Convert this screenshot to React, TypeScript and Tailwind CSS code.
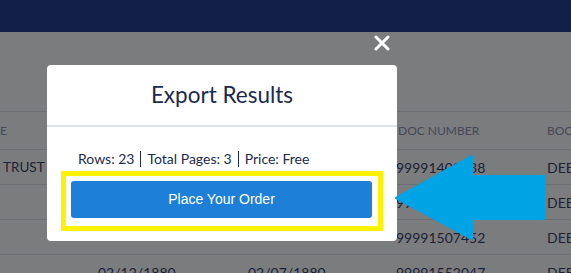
import React from 'react';

const rows = [
  { a: 'TRUST', b: '', c: '', doc: '99991402738', bk: 'DEED' },
  { a: '', b: '', c: '', doc: '99991403128', bk: 'DEED' },
  { a: '', b: '', c: '', doc: '99991507452', bk: 'DEED' },
  { a: '', b: '02/12/1880', c: '02/07/1880', doc: '99991552047', bk: 'DEED' },
];

const App: React.FC = () => {
  return (
    <div className="relative w-[571px] h-[273px] overflow-hidden bg-[#7b7c7e] font-['Lato',sans-serif]">
      {/* top bar */}
      <div className="h-8 bg-[#121f47]" />

      {/* results table behind the overlay */}
      <div className="mt-[79px] w-[700px]">
        <div className="flex h-[38px] items-center border-t border-[#6e6f72] text-[12px] uppercase text-[#454957]">
          <div className="w-[90px] shrink-0">E</div>
          <div className="w-[150px] shrink-0 pl-2">Recorded</div>
          <div className="w-[150px] shrink-0 pl-2">Doc Date</div>
          <div className="w-[157px] shrink-0 pl-2">Doc Number</div>
          <div className="shrink-0 whitespace-nowrap">Book Type</div>
        </div>
        {rows.map((r, i) => (
          <div
            key={i}
            className="flex h-[35px] items-center border-t border-[#6e6f72] text-[14px] text-[#1c2236]"
          >
            <div className="w-[90px] shrink-0 pl-[3px] text-[13.5px]">{r.a}</div>
            <div className="w-[150px] shrink-0 pl-2">{r.b}</div>
            <div className="w-[150px] shrink-0 pl-2">{r.c}</div>
            <div className="w-[157px] shrink-0 pl-1.5">{r.doc}</div>
            <div className="shrink-0 whitespace-nowrap">{r.bk}</div>
          </div>
        ))}
      </div>

      {/* close button */}
      <button className="absolute left-[374px] top-[35px] h-[16px] w-[16px] text-white" aria-label="Close">
        <svg viewBox="0 0 16 16" className="h-4 w-4">
          <path d="M2 2 L14 14 M14 2 L2 14" stroke="currentColor" strokeWidth="3" strokeLinecap="round" />
        </svg>
      </button>

      {/* modal */}
      <div className="absolute left-[47px] top-[65px] w-[350px] rounded-[4px] bg-white">
        <div className="flex h-[62px] items-center justify-center border-b-2 border-[#dde1e8]">
          <h2 className="text-[22.5px] text-[#1b2a4e]">Export Results</h2>
        </div>
        <div className="px-[14px] pb-[10px] pt-[24px]">
          <div className="flex items-center pl-[17px] text-[14px] leading-none text-[#1b2a4e]">
            <span>Rows: 23</span>
            <span className="mx-[6px] h-[16px] w-px bg-[#1b2a4e]" />
            <span>Total Pages: 3</span>
            <span className="mx-[6px] h-[16px] w-px bg-[#1b2a4e]" />
            <span>Price: Free</span>
          </div>
          <div className="mt-[4px] border-[5px] border-[#fff200] pb-[8px] pl-[5px] pr-[6px] pt-[5px]">
            <button className="flex h-[37px] w-full items-center justify-center rounded-[3px] bg-[#1e7fd8] font-['Liberation_Sans',Arial,sans-serif] text-[14px] text-white">
              Place Your Order
            </button>
          </div>
        </div>
      </div>

      {/* arrow annotation */}
      <svg className="absolute left-[394px] top-[154px]" width="152" height="87" viewBox="0 0 152 87">
        <polygon
          points="2,44 78,2 78,22 150,22 150,65 78,65 78,85"
          fill="#00a3e4"
          stroke="#00a3e4"
          strokeWidth="2"
          strokeLinejoin="round"
        />
      </svg>
    </div>
  );
};

export default App;
